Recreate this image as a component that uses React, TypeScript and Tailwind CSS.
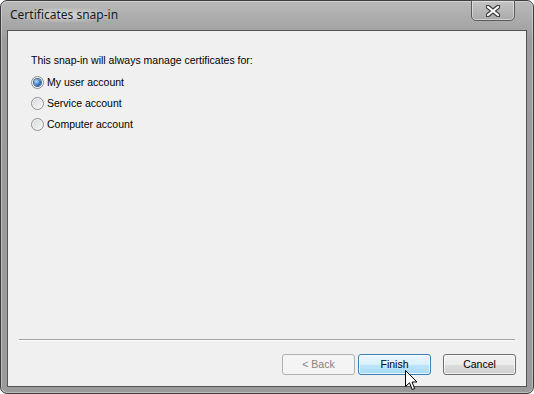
import React from "react";

/** Win7-style "Certificates snap-in" wizard page. */
export default function App() {
  return (
    <div className="h-[394px] w-[534px] bg-white font-['Liberation_Sans',Arial,sans-serif] text-[10.5px] text-black">
      <div className="relative flex h-[394px] w-[534px] flex-col rounded-[7px] border border-[#3c3c3c] bg-gradient-to-b from-[#b9b9b9] via-[#9c9c9c] via-[10%] to-[#9a9a9a] shadow-[inset_0_0_0_1px_rgba(255,255,255,0.35)]">
        <div className="flex h-[29px] shrink-0 items-start pl-[7px] pt-[6px]">
          <span className="rounded-full bg-[radial-gradient(closest-side,rgba(255,255,255,0.55),rgba(255,255,255,0))] px-[2px] font-['Noto_Sans',sans-serif] text-[12px] leading-[16px] text-[#1a1a1a]">
            Certificates snap-in
          </span>
        </div>
        <CloseButton />

        <div className="mx-[6px] mb-[6px] flex flex-1 flex-col border border-[#555] bg-[#f0f0f0]">
          <div className="flex-1 pl-[23px] pt-[22px]">
            <p className="leading-[14px]">
              This snap-in will always manage certificates for:
            </p>
            <div className="mt-[8px] flex flex-col gap-[7px]">
              <Radio label="My user account" checked />
              <Radio label="Service account" />
              <Radio label="Computer account" />
            </div>
          </div>

          <div className="mx-[11px] border-t border-[#a0a0a0] shadow-[0_1px_0_#fff]" />

          <div className="flex justify-end gap-[3px] pb-[11px] pr-[10px] pt-[14px]">
            <Button label="< Back" kind="disabled" />
            <div className="relative">
              <Button label="Finish" kind="hover" />
              <Cursor />
            </div>
            <div className="ml-[9px]">
              <Button label="Cancel" />
            </div>
          </div>
        </div>
      </div>
    </div>
  );
}

function CloseButton() {
  return (
    <div className="absolute right-[18px] top-[-1px] flex h-[21px] w-[44px] items-center justify-center rounded-b-[5px] border border-[#5a5a5a] bg-gradient-to-b from-[#c4c4c4] to-[#a9a9a9] shadow-[inset_0_0_0_1px_rgba(255,255,255,0.45)]">
      <svg width="14" height="12" viewBox="0 0 14 12">
        <path
          d="M1.5 1.5 L12.5 10.5 M12.5 1.5 L1.5 10.5"
          stroke="#3d3d3d"
          strokeWidth="4.4"
          strokeLinecap="round"
        />
        <path
          d="M2 2 L12 10 M12 2 L2 10"
          stroke="#fff"
          strokeWidth="2.2"
          strokeLinecap="round"
        />
      </svg>
    </div>
  );
}

function Radio({ label, checked }: { label: string; checked?: boolean }) {
  return (
    <label className="flex items-center gap-[3px] leading-[14px]">
      <span className="grid h-[13px] w-[13px] place-items-center rounded-full border border-[#8e8f8f] bg-gradient-to-br from-[#d8d8d8] to-[#f8f8f8] shadow-[inset_0_0_0_1px_#f4f4f4]">
        {checked && (
          <span className="h-[7px] w-[7px] rounded-full bg-[radial-gradient(circle_at_35%_35%,#b4e3ff,#1e5aa8_70%)] shadow-[0_0_0_1px_#3d6b98]" />
        )}
      </span>
      <span>{label}</span>
    </label>
  );
}

function Button({
  label,
  kind,
}: {
  label: string;
  kind?: "disabled" | "hover";
}) {
  if (kind === "disabled")
    return (
      <div className="flex h-[21px] w-[73px] items-center justify-center rounded-[3px] border border-[#adb2b5] bg-[#f4f4f4] text-[#838383]">
        {label}
      </div>
    );
  if (kind === "hover")
    return (
      <div className="flex h-[21px] w-[73px] items-center justify-center rounded-[3px] border border-[#3c7fb1] bg-[linear-gradient(to_bottom,#eaf6fd_0%,#d9f0fc_50%,#bee6fd_51%,#a7d9f5_100%)] shadow-[inset_0_0_0_1px_rgba(255,255,255,0.7)]">
        {label}
      </div>
    );
  return (
    <div className="flex h-[21px] w-[73px] items-center justify-center rounded-[3px] border border-[#707070] bg-[linear-gradient(to_bottom,#f2f2f2_0%,#ebebeb_50%,#dddddd_51%,#cfcfcf_100%)] shadow-[inset_0_0_0_1px_rgba(255,255,255,0.7)]">
      {label}
    </div>
  );
}

function Cursor() {
  return (
    <svg
      className="absolute left-[47px] top-[16px]"
      width="13"
      height="21"
      viewBox="0 0 13 21"
    >
      <path
        d="M0.5 0.5 L0.5 16.5 L4.5 12.8 L7.2 19.5 L9.6 18.5 L7 12 L12 12 Z"
        fill="#fff"
        stroke="#000"
        strokeWidth="1"
        strokeLinejoin="miter"
      />
    </svg>
  );
}
